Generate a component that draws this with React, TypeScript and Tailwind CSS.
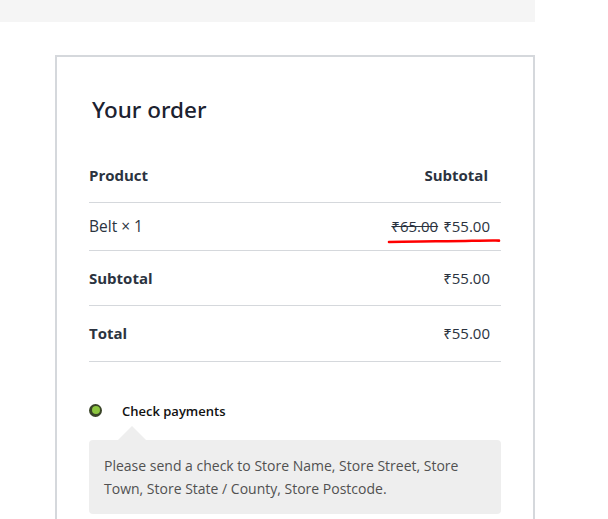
const App = () => {
  return (
    <div className="min-h-screen bg-white font-['Open_Sans','Noto_Sans',sans-serif] text-[#2b3340]">
      <div className="h-[22px] w-[535px] bg-[#f5f5f5]" />

      <div className="ml-[55px] mt-[33px] w-[480px] border-2 border-[#d5d8dc] px-8 pb-10 pt-[38px]">
        <h3 className="ml-[3px] font-['Noto_Sans','Open_Sans',sans-serif] text-[22.5px] leading-[30px] font-medium text-[#1c2230]">
          Your order
        </h3>

        <div className="mt-[23px] text-[15px]">
          <div className="flex h-[55px] items-center justify-between border-b border-[#d5d8dc] font-bold">
            <span>Product</span>
            <span className="pr-[13px]">Subtotal</span>
          </div>
          <div className="relative flex h-[48px] items-center justify-between border-b border-[#d5d8dc]">
            <span className="text-[15.5px]">Belt × 1</span>
            <span className="pr-[11px]">
              <del className="mr-[5px]">₹65.00</del>
              <span>₹55.00</span>
            </span>
            <svg
              className="absolute right-0 top-[34px]"
              width="114"
              height="8"
              viewBox="0 0 114 8"
            >
              <path
                d="M2 5 C 30 4.2, 60 4.4, 85 3.8 S 105 3.4, 112 3.6"
                stroke="#ff0000"
                strokeWidth="2.6"
                strokeLinecap="round"
                fill="none"
              />
            </svg>
          </div>
          <div className="flex h-[55px] items-center justify-between border-b border-[#d5d8dc]">
            <span className="font-bold">Subtotal</span>
            <span className="pr-[11px]">₹55.00</span>
          </div>
          <div className="flex h-[56px] items-center justify-between border-b border-[#d5d8dc]">
            <span className="font-bold">Total</span>
            <span className="pr-[11px]">₹55.00</span>
          </div>
        </div>

        <div className="mt-[36px] flex h-[24px] items-center">
          <span className="flex h-[13px] w-[13px] items-center justify-center rounded-full bg-[#3a4428]">
            <span className="h-[8px] w-[8px] rounded-full bg-[#8cc63f]" />
          </span>
          <span className="ml-[20px] mt-[3px] text-[13px] font-semibold text-[#111]">Check payments</span>
        </div>

        <div className="relative mt-[18px] rounded-sm bg-[#eeeeee] px-[15px] py-[14px] text-[14px] leading-[23px] text-[#515151]">
          <span className="absolute -top-[14px] left-[29px] h-0 w-0 border-x-[14px] border-b-[14px] border-x-transparent border-b-[#eeeeee]" />
          Please send a check to Store Name, Store Street, Store Town, Store State / County, Store Postcode.
        </div>
      </div>
    </div>
  )
}

export default App
